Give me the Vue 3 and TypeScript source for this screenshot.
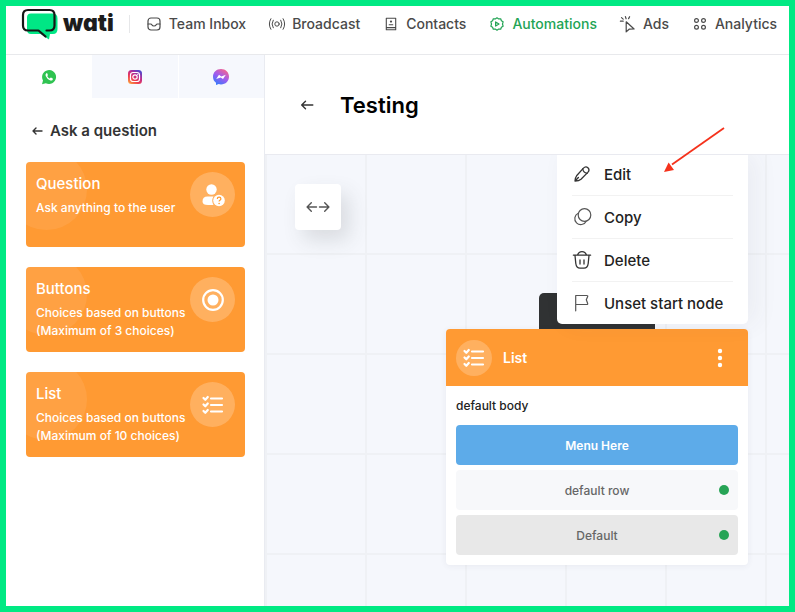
<script setup lang="ts">
interface NavItem { id: string; label: string; active?: boolean }
interface Block { id: string; title: string; lines: string[] }
interface MenuAction { id: string; label: string }

const navItems: NavItem[] = [
  { id: 'inbox', label: 'Team Inbox' },
  { id: 'broadcast', label: 'Broadcast' },
  { id: 'contacts', label: 'Contacts' },
  { id: 'automations', label: 'Automations', active: true },
  { id: 'ads', label: 'Ads' },
  { id: 'analytics', label: 'Analytics' },
]

const blocks: Block[] = [
  { id: 'question', title: 'Question', lines: ['Ask anything to the user'] },
  { id: 'buttons', title: 'Buttons', lines: ['Choices based on buttons', '(Maximum of 3 choices)'] },
  { id: 'list', title: 'List', lines: ['Choices based on buttons', '(Maximum of 10 choices)'] },
]

const actions: MenuAction[] = [
  { id: 'edit', label: 'Edit' },
  { id: 'copy', label: 'Copy' },
  { id: 'delete', label: 'Delete' },
  { id: 'unset', label: 'Unset start node' },
]
</script>

<template>
  <div class="page">
    <header class="topbar">
      <a class="brand" href="#">
        <svg width="36" height="31" viewBox="0 0 36 31" aria-hidden="true">
          <path d="M9 4.500h21.500q5 0 5 5v10.500q0 5-4.500 5h-3l-1 5.500-8.500-5.500H9q-4 0-4-4.500V8.500q0-4 4-4Z" fill="#00e785" />
          <path d="M24.500 21.500h3q5 0 5-5V6q0-5-5-5H6Q1 1 1 6v10.500q0 5 5 5h10.500l7 6" fill="none" stroke="#161616" stroke-width="2.200" stroke-linecap="round" stroke-linejoin="round" />
        </svg>
        <span class="brand-name">wati</span>
      </a>
      <nav class="nav">
        <a v-for="item in navItems" :key="item.id" href="#" class="nav-link" :class="{ active: item.active }">
          <svg class="line-icon" width="16" height="16" viewBox="0 0 16 16" aria-hidden="true">
            <g v-if="item.id === 'inbox'">
              <rect x="2" y="2" width="12" height="12" rx="3" />
              <path d="M2 8h2.500q1 0 1.500 1t2 1 2-1 1.500-1H14" />
            </g>
            <g v-else-if="item.id === 'broadcast'" stroke-width="1">
              <circle cx="8" cy="8" r="2.200" />
              <path d="M4.200 4.200q-2.400 3.800 0 7.600M11.800 4.200q2.400 3.800 0 7.600M1.900 2.700q-3.200 5.300 0 10.600M14.100 2.700q3.200 5.300 0 10.600" />
            </g>
            <g v-else-if="item.id === 'contacts'" stroke-width="1.100">
              <path d="M3.300 2.200h9.400v11.600H3.300zM3.300 11.600h9.400" />
              <circle cx="8" cy="5.600" r=".6" />
              <path d="M6.200 8.700h3.600" />
            </g>
            <g v-else-if="item.id === 'automations'">
              <path d="M8 1.800l1.700 1.100 2-.1.700 1.900 1.700 1.100L13.500 8l.6 2.200-1.700 1.100-.7 1.900-2-.1L8 14.200l-1.700-1.100-2 .1-.7-1.900-1.700-1.100L2.500 8l-.6-2.200 1.700-1.100.7-1.900 2 .1z" />
              <path d="M6.600 5.900v4.200L10 8z" />
            </g>
            <g v-else-if="item.id === 'ads'">
              <path d="M6.200 5.800v10.100l2.900-2.700 5-.2zM5.400.6l.7 2.200M9.600.7l-1 1.900M1.500 1.600l1.700 1.500M.4 5.200h2.800" />
            </g>
            <g v-else>
              <circle cx="4.500" cy="4.500" r="1.900" />
              <circle cx="11.500" cy="4.500" r="1.900" />
              <circle cx="4.500" cy="11.200" r="1.900" />
              <circle cx="11.500" cy="11.200" r="1.900" />
            </g>
          </svg>
          <span>{{ item.label }}</span>
        </a>
      </nav>
    </header>

    <div class="workspace">
      <aside class="sidebar">
        <div class="tabs">
          <button type="button" class="tab selected" aria-label="WhatsApp">
            <svg width="16" height="16" viewBox="0 0 16 16" aria-hidden="true">
              <path d="M1 15.200l1-3.700A7 7 0 1 1 4.800 14.200z" fill="#2fc351" />
              <path d="M5.400 4.200q-1.400 1-.7 2.800 1.300 3.200 4.600 4.500 1.800.5 2.500-1.100.2-.8-.1-1L10 8.600q-.4-.1-.8.500-.4.500-.8.300Q6.900 8.700 6.300 7.300q0-.3.300-.6.400-.5.200-.9L6.200 4.300Q5.900 4 5.400 4.200Z" fill="#fff" />
            </svg>
          </button>
          <button type="button" class="tab" aria-label="Instagram">
            <svg width="16" height="16" viewBox="0 0 16 16" aria-hidden="true">
              <defs>
                <linearGradient id="insta" x1="0" y1="1" x2=".7" y2="0">
                  <stop offset="0" stop-color="#fdb43c" />
                  <stop offset=".4" stop-color="#ee3b50" />
                  <stop offset=".7" stop-color="#b92c92" />
                  <stop offset="1" stop-color="#5547c9" />
                </linearGradient>
              </defs>
              <rect x="1" y="1" width="14" height="14" rx="3.500" fill="url(#insta)" />
              <rect x="3.500" y="3.500" width="9" height="9" rx="2.500" fill="none" stroke="#fff" stroke-width="1.200" />
              <circle cx="8" cy="8" r="2.200" fill="none" stroke="#fff" stroke-width="1.200" />
              <circle cx="10.700" cy="5.300" r=".6" fill="#fff" />
            </svg>
          </button>
          <button type="button" class="tab" aria-label="Messenger">
            <svg width="16" height="16" viewBox="0 0 16 16" aria-hidden="true">
              <defs>
                <linearGradient id="msgr" x1=".2" y1="1" x2=".8" y2="0">
                  <stop offset="0" stop-color="#2e7dfb" />
                  <stop offset=".5" stop-color="#9e5cf0" />
                  <stop offset="1" stop-color="#fb6488" />
                </linearGradient>
              </defs>
              <path d="M8 0c4.600 0 8 3.300 8 7.700s-3.400 7.700-8 7.700q-1.200 0-2.300-.3L3 16v-2.200Q0 11.500 0 7.700C0 3.300 3.400 0 8 0Z" fill="url(#msgr)" />
              <path d="M3.200 10l2.800-4.300 2.300 1.700 4.500-1.600L10 10.100 7.700 8.400z" fill="#fff" />
            </svg>
          </button>
        </div>

        <div class="panel">
          <h2 class="panel-title">
            <button type="button" class="back" aria-label="Back">
              <svg width="12" height="12" viewBox="0 0 12 12" aria-hidden="true"><path d="M11 6H2M5 3L2 6l3 3" /></svg>
            </button>
            Ask a question
          </h2>

          <button v-for="block in blocks" :key="block.id" type="button" class="block">
            <span class="block-text">
              <span class="block-title">{{ block.title }}</span>
              <span v-for="line in block.lines" :key="line" class="block-line">{{ line }}</span>
            </span>
            <span class="block-icon">
              <svg v-if="block.id === 'question'" width="24" height="24" viewBox="0 0 24 24" aria-hidden="true">
                <circle cx="10.500" cy="6.500" r="5.200" fill="#fff" />
                <path d="M1.500 18.500q0-5 5-5h6q-2.500 4 0 8.500H7q-5.500 0-5.500-3.500Z" fill="#fff" />
                <circle cx="18" cy="17.500" r="5.800" fill="#fff" />
                <path d="M16.300 15.900q0-1.700 1.800-1.700t1.800 1.600q0 .9-1 1.500-.8.500-.8 1.300" fill="none" stroke="#ff9a31" stroke-width="1.200" />
                <circle cx="18.100" cy="20.500" r=".8" fill="#ff9a31" />
              </svg>
              <svg v-else-if="block.id === 'buttons'" width="24" height="24" viewBox="0 0 24 24" aria-hidden="true">
                <circle cx="12" cy="12" r="9.800" fill="none" stroke="#fff" stroke-width="2.200" />
                <circle cx="12" cy="12" r="5.500" fill="#fff" />
              </svg>
              <svg v-else class="checks" width="24" height="24" viewBox="0 0 24 24" aria-hidden="true">
                <path d="M10 5.500H21M10 12H21M10 18.500H21M2.500 5l1.800 1.800L6.800 4M2.500 11.500l1.800 1.800 2.500-2.800M2.500 18l1.800 1.800L6.800 17" />
              </svg>
            </span>
          </button>
        </div>
      </aside>

      <main class="editor">
        <div class="editor-head">
          <button type="button" class="back" aria-label="Back to flows">
            <svg width="14" height="14" viewBox="0 0 14 14" aria-hidden="true"><path d="M12.800 7H1.800M5.500 3.300L1.700 7l3.800 3.700" /></svg>
          </button>
          <h1>Testing</h1>
        </div>

        <div class="canvas">
          <button type="button" class="fit" aria-label="Toggle sidebar">
            <svg width="24" height="12" viewBox="0 0 24 12" aria-hidden="true"><path d="M10.500 6H1.500M5.300 1.800L1.100 6l4.200 4.200M13.500 6h9M18.700 1.800L22.900 6l-4.200 4.200" /></svg>
          </button>

          <div class="start-badge"></div>

          <section class="node">
            <header class="node-head">
              <span class="node-icon">
                <svg class="checks" width="24" height="24" viewBox="0 0 24 24" aria-hidden="true">
                  <path d="M10 5.500H21M10 12H21M10 18.500H21M2.500 5l1.800 1.800L6.800 4M2.500 11.500l1.800 1.800 2.500-2.800M2.500 18l1.800 1.800L6.800 17" />
                </svg>
              </span>
              <span class="node-title">List</span>
              <button type="button" class="more" aria-label="Node actions">
                <svg width="6" height="20" viewBox="0 0 6 20" aria-hidden="true">
                  <circle cx="3" cy="3" r="2.200" /><circle cx="3" cy="10" r="2.200" /><circle cx="3" cy="17" r="2.200" />
                </svg>
              </button>
            </header>
            <div class="node-body">
              <p>default body</p>
              <button type="button" class="row menu-row">Menu Here</button>
              <div class="row light-row">default row<i class="port"></i></div>
              <div class="row grey-row">Default<i class="port"></i></div>
            </div>
          </section>

          <div class="menu">
            <button v-for="action in actions" :key="action.id" type="button" class="menu-item">
              <svg class="line-icon" width="20" height="20" viewBox="0 0 20 20" aria-hidden="true">
                <g v-if="action.id === 'edit'" stroke="#333" stroke-width="1.300">
                  <path d="M3 17q.2-3.500 1.600-5.200l6.600-7.400q2.400-2.600 4.700-.7 2.200 2.200-.1 4.700l-6.800 6.800Q7 16.900 3 17ZM3 17l3.400-3.500" />
                  <path d="M10.800 5q.4 3.600 4.300 4.300" />
                </g>
                <g v-else-if="action.id === 'copy'" stroke="#555" stroke-width="1.200">
                  <circle cx="12.500" cy="8" r="6.300" />
                  <path d="M6.200 6.200a6 6 0 1 0 8 8" />
                </g>
                <g v-else-if="action.id === 'delete'" stroke="#333" stroke-width="1.300">
                  <path d="M1.400 5.200h17.200M5.500 5q1.200-3.400 4.500-3.400T14.500 5M3 5.500l.8 8q.6 4.700 4.200 4.700h4q3.600 0 4.200-4.700l.8-8M8 10v4M12 10v4" />
                </g>
                <g v-else stroke="#555" stroke-width="1.200">
                  <path d="M3.700 17.800V2.500h11q1.500 0 .9 1.300l-1.300 3 1.300 3.400q.6 1.300-.9 1.300h-11" />
                </g>
              </svg>
              <span>{{ action.label }}</span>
            </button>
          </div>
        </div>

        <svg class="pointer" width="64" height="48" viewBox="0 0 64 48" aria-hidden="true">
          <path d="M62 2L10 38.500" stroke="#f5321c" stroke-width="1.800" />
          <path d="M2 46l4.600-9.500 5.400 7.500z" fill="#f5321c" />
        </svg>
      </main>
    </div>
  </div>
</template>

<style>
body {
  margin: 0;
}
</style>

<style scoped>
.page {
  box-sizing: border-box;
  min-height: 100vh;
  display: flex;
  flex-direction: column;
  border: 6px solid #00e983;
  background: #fff;
  color: #222;
  font-family: Inter, "Liberation Sans", sans-serif;
  font-size: 12px;
}

button {
  margin: 0;
  padding: 0;
  border: 0;
  background: none;
  font: inherit;
  color: inherit;
  text-align: left;
}

a {
  color: inherit;
  text-decoration: none;
}

.topbar {
  display: flex;
  align-items: center;
  height: 36px;
  padding: 0 12px 12px 16px;
  border-bottom: 1px solid #e8e9ec;
}

.brand {
  display: flex;
  align-items: center;
  gap: 5px;
  padding-right: 15px;
}

.brand svg {
  overflow: visible;
}

.brand-name {
  color: #1c1c1c;
  font-size: 23px;
  font-weight: 900;
  line-height: 28px;
  padding-bottom: 2px;
  font-feature-settings: "cv11";
}

.nav {
  display: flex;
  gap: 23px;
  padding-left: 16px;
  border-left: 1px solid #e6e7e9;
}

.nav-link {
  display: flex;
  align-items: center;
  gap: 7px;
  color: #4a4a4a;
  font-size: 14px;
  font-weight: 500;
  line-height: 18px;
  white-space: nowrap;
}

.nav-link.active {
  color: #23a455;
}

.line-icon {
  flex: none;
  fill: none;
  stroke: currentColor;
  stroke-width: 1.2;
  stroke-linejoin: round;
  stroke-linecap: round;
  overflow: visible;
}

.workspace {
  flex: 1;
  display: flex;
}

.sidebar {
  flex: none;
  width: 258px;
  border-right: 1px solid #e9ebf1;
}

.tabs {
  display: flex;
  gap: 1px;
}

.tab {
  flex: 1;
  display: flex;
  align-items: center;
  justify-content: center;
  height: 43px;
  background: #f6f8fd;
}

.tab.selected {
  background: #fff;
}

.panel {
  display: flex;
  flex-direction: column;
  gap: 20px;
  padding: 22px 19px 22px 20px;
}

.panel-title {
  display: flex;
  align-items: center;
  gap: 7px;
  margin: 0;
  padding-left: 5px;
  color: #333;
  font-size: 15px;
  font-weight: 600;
  line-height: 22px;
}

.back {
  display: flex;
}

.back svg,
.fit svg {
  fill: none;
  stroke: #333;
  stroke-width: 1.4;
  stroke-linecap: round;
  stroke-linejoin: round;
}

.block {
  position: relative;
  display: flex;
  justify-content: space-between;
  height: 85px;
  padding: 10px;
  box-sizing: border-box;
  overflow: hidden;
  border-radius: 4px;
  background: #ff9a33;
  color: #fff;
}

.block::before {
  content: "";
  position: absolute;
  left: -20px;
  top: -13px;
  width: 81px;
  height: 81px;
  border-radius: 50%;
  background: rgba(255, 255, 255, 0.08);
}

.block-text {
  display: flex;
  flex-direction: column;
  white-space: nowrap;
}

.block-title {
  margin-bottom: 4px;
  font-size: 15px;
  font-weight: 500;
  line-height: 23px;
}

.block-line {
  font-weight: 500;
  line-height: 18px;
}

.block-icon,
.node-icon {
  flex: none;
  display: flex;
  align-items: center;
  justify-content: center;
  width: 45px;
  height: 45px;
  border-radius: 50%;
  background: rgba(255, 255, 255, 0.22);
}

.node-icon {
  width: 36px;
  height: 36px;
}

.checks {
  fill: none;
  stroke: #fff;
  stroke-width: 2.2;
  stroke-linecap: round;
  stroke-linejoin: round;
}

.editor {
  position: relative;
  flex: 1;
  display: flex;
  flex-direction: column;
  min-width: 0;
}

.editor-head {
  display: flex;
  align-items: center;
  gap: 26px;
  height: 99px;
  padding: 0 35px;
  border-bottom: 1px solid #e9eaf0;
}

.editor-head h1 {
  margin: 0;
  color: #000;
  font-size: 22px;
  font-weight: 600;
  line-height: 28px;
}

.canvas {
  position: relative;
  flex: 1;
  overflow: hidden;
  background-color: #f5f7fc;
  background-image:
    linear-gradient(90deg, transparent 98px, #eff1f5 98px),
    linear-gradient(transparent 98px, #eff1f5 98px);
  background-size: 100px 100px;
  background-position: 2px 0;
}

.fit {
  position: absolute;
  left: 30px;
  top: 29px;
  display: flex;
  align-items: center;
  justify-content: center;
  width: 46px;
  height: 46px;
  border-radius: 4px;
  background: #fff;
  box-shadow: 8px 10px 20px rgba(60, 70, 70, 0.15);
}

.fit svg {
  stroke: #555;
}

.start-badge {
  position: absolute;
  left: 274px;
  top: 138px;
  width: 116px;
  height: 40px;
  border-radius: 5px 5px 0 0;
  background: #303233;
}

.node {
  position: absolute;
  left: 181px;
  top: 174px;
  width: 302px;
  overflow: hidden;
  border-radius: 4px;
  background: #fff;
  box-shadow: 0 1px 6px rgba(50, 60, 80, 0.07);
}

.node-head {
  display: flex;
  align-items: center;
  gap: 11px;
  height: 57px;
  padding: 0 25px 0 10px;
  background: #ff9a33;
  color: #fff;
}

.node-title {
  flex: 1;
  font-size: 14px;
  font-weight: 600;
}

.more {
  display: flex;
  fill: #fff;
}

.node-body {
  display: flex;
  flex-direction: column;
  gap: 5px;
  padding: 10px;
}

.node-body p {
  margin: 0 0 5px;
  color: #222;
  font-weight: 500;
  line-height: 19px;
}

.row {
  position: relative;
  display: flex;
  align-items: center;
  justify-content: center;
  height: 40px;
  border-radius: 4px;
  color: #666;
  font-weight: 500;
}

.menu-row {
  background: #5dabe9;
  color: #fff;
  font-weight: 600;
}

.light-row {
  background: #f7f8fa;
}

.grey-row {
  background: #e8e8e8;
}

.port {
  position: absolute;
  right: 9px;
  width: 10px;
  height: 10px;
  border-radius: 50%;
  background: #27a456;
}

.menu {
  position: absolute;
  left: 292px;
  top: 0;
  box-sizing: border-box;
  width: 191px;
  padding: 0 15px;
  border-radius: 0 0 5px 5px;
  background: #fff;
  box-shadow: 8px 0 24px rgba(60, 70, 90, 0.06);
}

.menu-item {
  box-sizing: border-box;
  display: flex;
  align-items: center;
  gap: 12px;
  width: 100%;
  height: 43px;
  border-bottom: 1px solid #f2f2f2;
  font-size: 15px;
  font-weight: 500;
  white-space: nowrap;
}

.menu-item:first-child {
  height: 41px;
  padding-bottom: 2px;
}

.menu-item:last-child {
  height: 42px;
  border-bottom: 0;
}

.pointer {
  position: absolute;
  left: 397px;
  top: 71px;
  pointer-events: none;
}
</style>
